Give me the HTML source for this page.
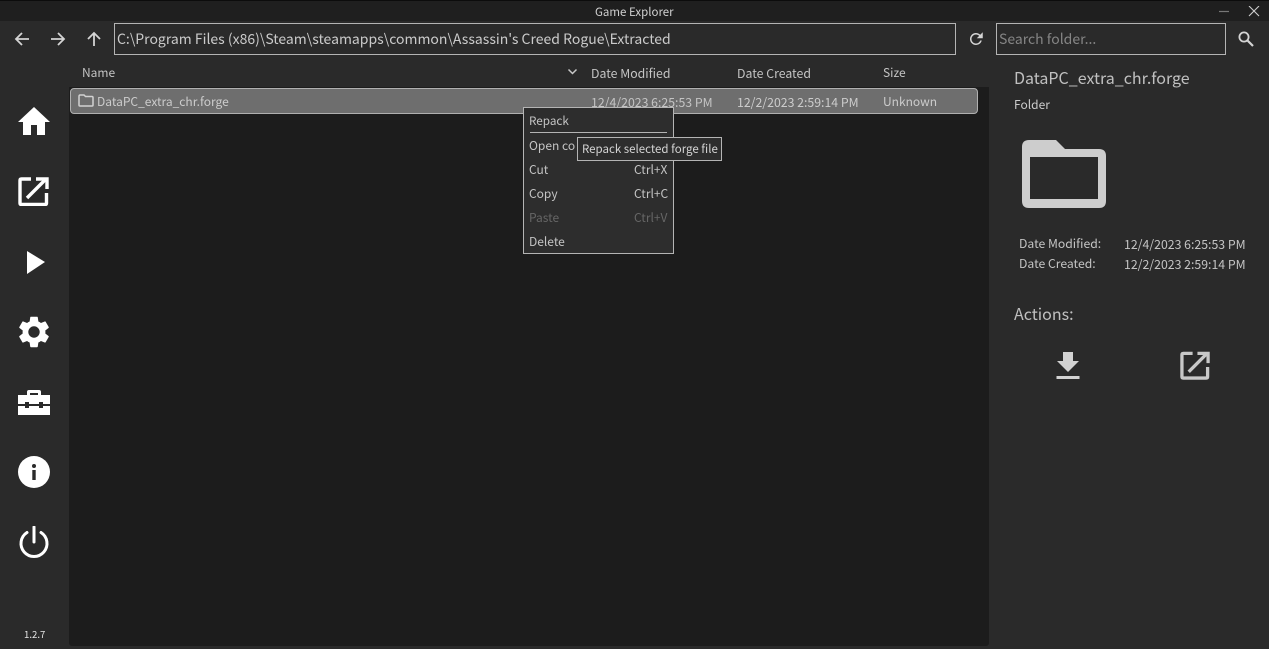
<!DOCTYPE html>
<html><head><meta charset="utf-8"><style>
html,body{margin:0;padding:0;background:#2a2a2a;width:1269px;height:649px;overflow:hidden}
body{position:relative;font-family:"Noto Sans CJK JP","Liberation Sans",sans-serif;color:#c4c4c4}
div,svg{position:absolute;box-sizing:border-box}
.t{white-space:nowrap;font-size:12px;line-height:16px}
.d{font-size:12.3px}
</style></head><body>
<div style="left:0;top:0;width:1269px;height:21px;background:#1f1f1f"></div>
<div style="left:0;top:0;width:1269px;height:1px;background:#0c0c0c"></div>
<div class="t" style="left:595px;top:4px;font-size:11.5px;color:#d0d0d0">Game Explorer</div>
<svg style="left:1218px;top:6px" width="46" height="12" viewBox="0 0 46 12"><path d="M1 5.5H11" stroke="#777" stroke-width="1.2"/><path d="M31 0L41 10M41 0L31 10" stroke="#ccc" stroke-width="1.1" fill="none"/></svg>

<svg style="left:14px;top:30px" width="96" height="18" viewBox="0 0 96 18" fill="none" stroke="#d4d4d4" stroke-width="1.8"><path d="M2 9H15M8 3L2 9L8 15"/><path d="M37 9H50M44 3L50 9L44 15"/><path d="M80 16V3M74 9L80 3L86 9"/></svg>
<div style="left:114px;top:23px;width:842px;height:32px;border:1px solid #b4b4b4"></div>
<div class="t" style="left:117px;top:30px;font-size:14px;line-height:18px;color:#cbcbcb">C:\Program Files (x86)\Steam\steamapps\common\Assassin's Creed Rogue\Extracted</div>
<svg style="left:967px;top:30px" width="18" height="18" viewBox="0 0 24 24" fill="#d4d4d4"><path d="M17.65 6.35A8 8 0 1 0 19.73 14h-2.08A6 6 0 1 1 12 6c1.66 0 3.14.69 4.22 1.78L13 11h8V3z"/></svg>
<div style="left:996px;top:23px;width:230px;height:32px;border:1px solid #b4b4b4"></div>
<div class="t" style="left:999px;top:30px;font-size:14px;line-height:18px;color:#858585">Search folder...</div>
<svg style="left:1237px;top:30px" width="18" height="18" viewBox="0 0 18 18" fill="none" stroke="#d4d4d4"><circle cx="7" cy="7" r="4.6" stroke-width="1.8"/><path d="M10.5 10.5L16 16" stroke-width="2.2"/></svg>

<div style="left:69px;top:87px;width:920px;height:559px;background:#1c1c1c;border-radius:0 0 3px 3px"></div>
<div class="t" style="left:82px;top:65px">Name</div>
<svg style="left:567px;top:68px" width="11" height="8" viewBox="0 0 11 8" fill="none" stroke="#c8c8c8" stroke-width="1.5"><path d="M1.5 1.5L5.5 5.5L9.5 1.5"/></svg>
<div class="t" style="left:591px;top:65px;font-size:12.3px">Date Modified</div>
<div class="t" style="left:737px;top:65px;font-size:12.3px">Date Created</div>
<div class="t" style="left:883px;top:65px">Size</div>

<div style="left:70px;top:88px;width:908px;height:26px;background:#6e6e6e;border:1px solid #b0b0b0;border-radius:4px"></div>
<svg style="left:78px;top:94px" width="16" height="13" viewBox="0 0 16 13" fill="none" stroke="#d2d2d2" stroke-width="1.5"><path d="M1 2.5Q1 1 2 1H6L7.5 2.5H14Q15 2.5 15 3.5V11Q15 12 14 12H2Q1 12 1 11Z"/></svg>
<div class="t" style="left:97px;top:94px;color:#cccccc">DataPC_extra_chr.forge</div>
<div class="t d" style="left:591px;top:94px">12/4/2023 6:25:53 PM</div>
<div class="t d" style="left:737px;top:94px;color:#cccccc">12/2/2023 2:59:14 PM</div>
<div class="t" style="left:883px;top:94px;color:#cccccc">Unknown</div>

<div style="left:523px;top:107px;width:151px;height:147px;background:#2d2d2d;border:1px solid #b4b4b4"></div>
<div class="t" style="left:529px;top:113px;font-size:11.7px">Repack</div>
<div style="left:530px;top:132px;width:137px;height:1px;background:#b4b4b4"></div>
<div class="t" style="left:529px;top:138px">Open co</div>
<div class="t" style="left:529px;top:162px">Cut</div>
<div class="t" style="left:634px;top:162px">Ctrl+X</div>
<div class="t" style="left:529px;top:186px">Copy</div>
<div class="t" style="left:634px;top:186px">Ctrl+C</div>
<div class="t" style="left:529px;top:210px;color:#666">Paste</div>
<div class="t" style="left:634px;top:210px;color:#666">Ctrl+V</div>
<div class="t" style="left:529px;top:234px">Delete</div>
<div style="left:577px;top:137px;width:145px;height:24px;background:#2d2d2d;border:1px solid #b4b4b4"></div>
<div class="t" style="left:582px;top:141px;font-size:11.5px;color:#d4d4d4">Repack selected forge file</div>

<svg style="left:17px;top:107px" width="34" height="30" viewBox="0 0 34 30" fill="#fff"><path d="M17 0L33 15H28V28H20V18H14V28H6V15H1Z"/></svg>
<svg style="left:18px;top:176px" width="32" height="30" viewBox="0 0 32 30" fill="none" stroke="#fff" stroke-width="3.4"><path d="M13 3H3.5Q2 3 2 4.500V27Q2 28.500 3.500 28.500H27Q28.500 28.500 28.500 27V17"/><path d="M9 22L27 4"/><path d="M18 3H29V13"/></svg>
<svg style="left:26px;top:250px" width="20" height="24" viewBox="0 0 20 24" fill="#fff"><path d="M1 1L19 12L1 24Z"/></svg>
<svg style="left:15px;top:313px" width="38" height="38" viewBox="0 0 24 24" fill="#fff"><path fill-rule="evenodd" d="M19.14 12.94c.04-.3.06-.61.06-.94s-.02-.64-.07-.94l2.03-1.58c.18-.14.23-.41.12-.61l-1.92-3.32c-.12-.22-.37-.29-.59-.22l-2.39.96c-.5-.38-1.03-.7-1.62-.94l-.36-2.54c-.04-.24-.24-.41-.48-.41h-3.84c-.24 0-.43.17-.47.41l-.36 2.54c-.59.24-1.13.57-1.62.94l-2.39-.96c-.22-.08-.47 0-.59.22L2.74 8.87c-.12.21-.08.47.12.61l2.03 1.58c-.05.3-.09.63-.09.94s.02.64.07.94l-2.03 1.58c-.18.14-.23.41-.12.61l1.92 3.32c.12.22.37.29.59.22l2.39-.96c.5.38 1.03.7 1.62.94l.36 2.54c.05.24.24.41.48.41h3.84c.24 0 .44-.17.47-.41l.36-2.54c.59-.24 1.13-.56 1.62-.94l2.39.96c.22.08.47 0 .59-.22l1.92-3.32c.12-.22.07-.47-.12-.61l-2.01-1.58zM12 15.6A3.6 3.6 0 1 1 12 8.400a3.600 3.600 0 0 1 0 7.200z"/></svg>
<svg style="left:18px;top:389px" width="32" height="26" viewBox="0 0 32 26" fill="#fff"><path fill-rule="evenodd" d="M9 6V3Q9 1 11 1H21Q23 1 23 3V6H32V15H25V13H21V15H11V13H7V15H0V6ZM12 6H20V4H12ZM0 17H7V19H11V17H21V19H25V17H32V26H0Z"/></svg>
<svg style="left:18px;top:456px" width="32" height="32" viewBox="0 0 32 32"><circle cx="16" cy="16" r="16" fill="#fff"/><rect x="14.300" y="14" width="3.400" height="10" fill="#2a2a2a"/><circle cx="16" cy="10" r="2" fill="#2a2a2a"/></svg>
<svg style="left:18px;top:526px" width="32" height="32" viewBox="0 0 32 32" fill="none" stroke="#fff" stroke-width="3"><path d="M16 1V16" stroke-linecap="round"/><path d="M9 6.500A13 13 0 1 0 23 6.500" stroke-linecap="round"/></svg>
<div class="t" style="left:24px;top:626px;font-size:9.6px;color:#e4e4e4">1.2.7</div>

<div class="t" style="left:1014px;top:66px;font-size:16px;line-height:22px;color:#c0c0c0">DataPC_extra_chr.forge</div>
<div class="t" style="left:1014px;top:97px;color:#cccccc">Folder</div>
<svg style="left:1022px;top:140px" width="84" height="68" viewBox="0 0 84 68" fill="#cdcdcd"><path fill-rule="evenodd" d="M7 0H34L43 9H77Q84 9 84 16V61Q84 68 77 68H7Q0 68 0 61V7Q0 0 7 0ZM8 17V59H76V17Z"/></svg>
<div class="t" style="left:1019px;top:235px;font-size:12.2px">Date Modified:</div>
<div class="t d" style="left:1124px;top:236px">12/4/2023 6:25:53 PM</div>
<div class="t" style="left:1019px;top:255px;font-size:12.2px">Date Created:</div>
<div class="t d" style="left:1124px;top:256px">12/2/2023 2:59:14 PM</div>
<div class="t" style="left:1014px;top:303px;font-size:16px;line-height:20px;color:#c0c0c0">Actions:</div>
<svg style="left:1056px;top:352px" width="24" height="28" viewBox="0 0 24 28" fill="#d2d2d2"><path d="M7 0H17V9H23L12 20L1 9H7Z"/><rect x="0.500" y="24" width="23" height="3"/></svg>
<svg style="left:1180px;top:350px" width="31" height="30" viewBox="0 0 32 30" fill="none" stroke="#c8c8c8" stroke-width="3.4"><path d="M13 3H3.5Q2 3 2 4.500V27Q2 28.500 3.500 28.500H27Q28.500 28.500 28.500 27V17"/><path d="M9 22L27 4"/><path d="M18 3H29V13"/></svg>
</body></html>
